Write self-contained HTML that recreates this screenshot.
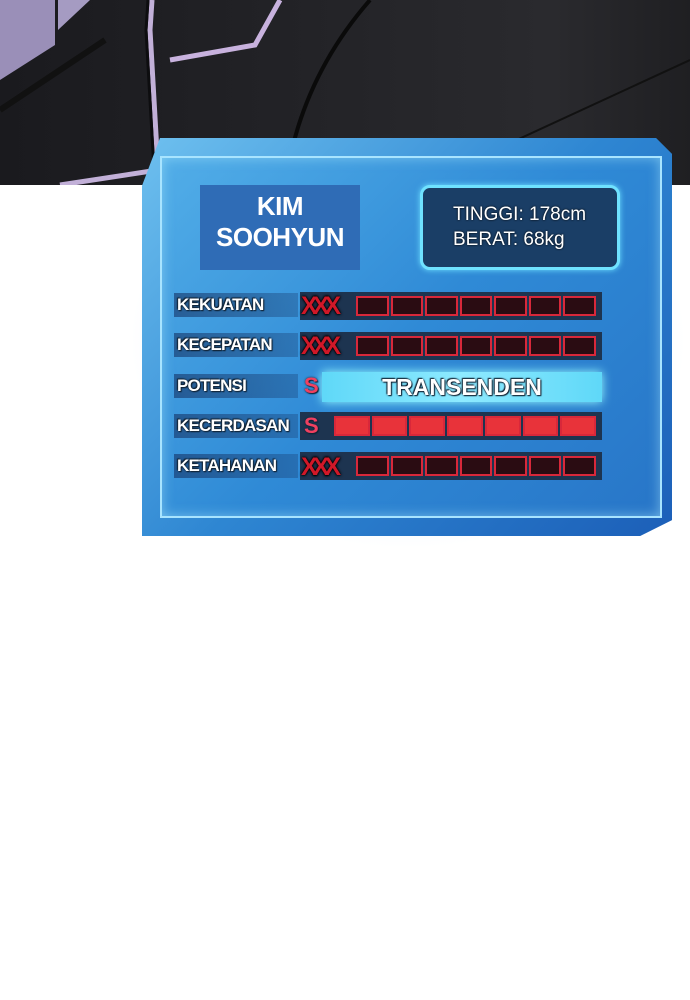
<!DOCTYPE html>
<html><head><style>
*{margin:0;padding:0;box-sizing:border-box}
body{width:690px;height:1000px;background:#fff;position:relative;overflow:hidden;font-family:"Liberation Sans",sans-serif}
.abs{position:absolute}
.lbl{position:absolute;left:174px;height:24px;color:#fff;font-weight:bold;font-size:17px;line-height:24px;letter-spacing:-0.8px;text-shadow:0 0 2px #123,1px 1px 1px #123,-1px -1px 1px #123;background:linear-gradient(90deg,rgba(20,50,100,.6),rgba(20,50,100,.3));padding-left:3px}
.bar{position:absolute;left:300px;width:302px;height:28px;background:#1d3450}
.seg{position:absolute;left:356px;width:240px;height:20px;display:flex;gap:2px}
.seg div{flex:1;background:#2a0c12;border:2px solid #d8283a}
.x{position:absolute;left:301px;width:58px;height:26px;color:#d01828;font-weight:bold;font-size:25px;line-height:26px;letter-spacing:-5px;text-shadow:0 0 3px #000,0 0 2px #000,0 0 1px #000}
.s{position:absolute;left:304px;color:#f04060;font-weight:bold;font-size:22px;text-shadow:0 0 2px #123,1px 1px 1px #123}
</style></head><body>
<svg class="abs" style="left:0;top:0" width="690" height="185">
<defs><linearGradient id="g" x1="0" x2="1"><stop offset="0" stop-color="#1a1a1e"/><stop offset="0.8" stop-color="#2a2a2e"/><stop offset="1" stop-color="#1f1f22"/></linearGradient></defs>
<rect width="690" height="185" fill="url(#g)"/>
<polygon points="0,0 55,0 55,45 0,80" fill="#9a8fb8"/>
<polygon points="58,0 90,0 58,30" fill="#a59bc2"/>
<path d="M0,110 L105,40" stroke="#111" stroke-width="6"/>
<path d="M152,0 L150,30 L158,170 L60,185" stroke="#c2b0d8" stroke-width="5" fill="none"/>
<path d="M148,0 L146,30 L154,170" stroke="#0d0d0f" stroke-width="3" fill="none"/>
<path d="M280,0 L255,45 L170,60" stroke="#c8b2de" stroke-width="5" fill="none"/>
<path d="M370,0 Q300,80 285,185" stroke="#0a0a0a" stroke-width="4" fill="none"/>
<path d="M430,180 L690,60" stroke="#111" stroke-width="2"/>
</svg>
<div class="abs" style="left:128px;top:130px;width:560px;height:420px;background:radial-gradient(ellipse at center,rgba(80,180,255,.35),rgba(80,180,255,0) 70%)"></div>
<div class="abs" style="left:142px;top:138px;width:530px;height:398px;background:linear-gradient(135deg,#6ec0ef,#2e86d2 50%,#1c5fb8);clip-path:polygon(18px 0,97% 0,100% 4%,100% 96%,94% 100%,0 100%,0 12%)"></div>
<div class="abs" style="left:160px;top:156px;width:502px;height:362px;border:2px solid #a8e4ff;background:linear-gradient(135deg,#52aee8,#2f8ad6 50%,#2876c8);box-shadow:inset 0 0 12px rgba(180,240,255,.5)"></div>
<div class="abs" style="left:200px;top:185px;width:160px;height:85px;background:#2f6cb6;color:#fff;font-weight:bold;font-size:26px;line-height:31px;text-align:center;padding-top:6px;letter-spacing:-0.5px">KIM<br>SOOHYUN</div>
<div class="abs" style="left:420px;top:185px;width:200px;height:85px;background:#1a3e66;border:3px solid #6fe2ff;border-radius:10px;box-shadow:0 0 6px #6fe2ff;color:#fff;font-size:19px;line-height:25px;padding:14px 0 0 30px;text-shadow:0 0 2px #000">TINGGI: 178cm<br>BERAT: 68kg</div>

<div class="bar" style="top:292px"></div><div class="seg" style="top:296px"><div></div><div></div><div></div><div></div><div></div><div></div><div></div></div>
<div class="lbl" style="top:293px;width:124px">KEKUATAN</div><div class="x" style="top:293px">XXX</div>
<div class="bar" style="top:332px"></div><div class="seg" style="top:336px"><div></div><div></div><div></div><div></div><div></div><div></div><div></div></div>
<div class="lbl" style="top:333px;width:124px">KECEPATAN</div><div class="x" style="top:333px">XXX</div>
<div class="abs" style="left:322px;top:372px;width:280px;height:30px;background:linear-gradient(90deg,#5fd8f8,#8eeaff,#5fd8f8);box-shadow:0 0 10px #9ff"></div>
<div class="abs" style="left:322px;top:372px;width:280px;height:30px;text-align:center;color:#fff;font-weight:bold;font-size:23px;line-height:30px;text-shadow:0 0 2px #123,1px 1px 1px #123,-1px -1px 1px #123">TRANSENDEN</div>
<div class="lbl" style="top:374px;width:124px">POTENSI</div><div class="s" style="top:373px">S</div>
<div class="bar" style="top:412px"></div><div class="seg" style="top:416px;left:334px;width:262px"><div style="background:#e8333a"></div><div style="background:#e8333a"></div><div style="background:#e8333a"></div><div style="background:#e8333a"></div><div style="background:#e8333a"></div><div style="background:#e8333a"></div><div style="background:#e8333a"></div></div>
<div class="lbl" style="top:414px;width:124px">KECERDASAN</div><div class="s" style="top:413px">S</div>
<div class="bar" style="top:452px"></div><div class="seg" style="top:456px"><div></div><div></div><div></div><div></div><div></div><div></div><div></div></div>
<div class="lbl" style="top:454px;width:124px">KETAHANAN</div><div class="x" style="top:454px">XXX</div>
</body></html>
